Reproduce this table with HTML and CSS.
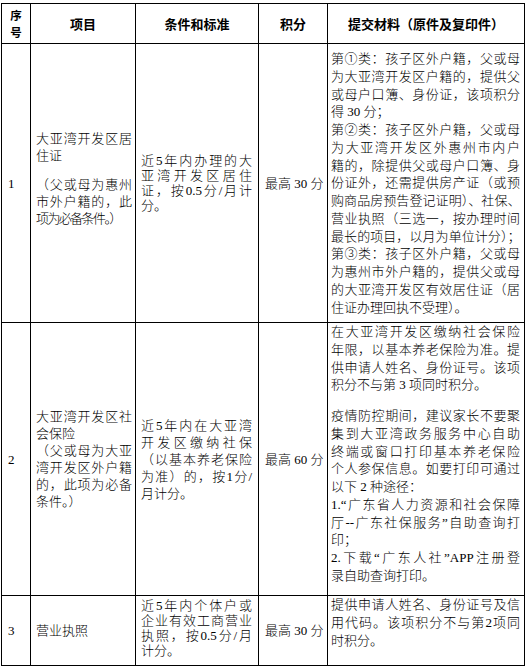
FILE: index.html
```html
<!DOCTYPE html>
<html lang="zh-CN">
<head>
<meta charset="utf-8">
<title>积分项目表</title>
<link rel="stylesheet" href="styles.css">
</head>
<body>
<table class="points">
  <colgroup>
    <col class="c-no"><col class="c-item"><col class="c-cond"><col class="c-score"><col class="c-docs">
  </colgroup>
  <thead>
    <tr class="r-head">
      <th class="no"><span class="hl">序</span><span class="hl">号</span></th>
      <th>项目</th>
      <th>条件和标准</th>
      <th>积分</th>
      <th>提交材料（原件及复印件）</th>
    </tr>
  </thead>
  <tbody>
    <tr class="r1">
      <td class="no">1</td>
      <td class="item">
        <span class="ln">大亚湾开发区居</span>
        <span class="end">住证</span>
        <span class="gap"></span>
        <span class="ln">（父或母为惠州</span>
        <span class="ln">市外户籍的，此</span>
        <span class="end squeeze">项为必备条件。）</span>
      </td>
      <td class="cond">
        <span class="ln">近5年内办理的大</span>
        <span class="ln">亚湾开发区居住</span>
        <span class="ln">证，按0.5分/月计</span>
        <span class="end">分。</span>
      </td>
      <td class="score">最高 30 分</td>
      <td class="docs">
        <span class="ln">第①类：孩子区外户籍，父或母</span>
        <span class="ln">为大亚湾开发区户籍的，提供父</span>
        <span class="ln">或母户口簿、身份证，该项积分</span>
        <span class="end">得 30 分；</span>
        <span class="ln">第②类：孩子区外户籍，父或母</span>
        <span class="ln">为大亚湾开发区外惠州市内户</span>
        <span class="ln">籍的，除提供父或母户口簿、身</span>
        <span class="ln">份证外，还需提供房产证（或预</span>
        <span class="ln tight">购商品房预告登记证明）、社保、</span>
        <span class="ln">营业执照（三选一，按办理时间</span>
        <span class="ln tight">最长的项目，以月为单位计分）；</span>
        <span class="ln">第③类：孩子区外户籍，父或母</span>
        <span class="ln">为惠州市外户籍的，提供父或母</span>
        <span class="ln">的大亚湾开发区有效居住证（居</span>
        <span class="end">住证办理回执不受理）。</span>
      </td>
    </tr>
    <tr class="r2">
      <td class="no">2</td>
      <td class="item">
        <span class="ln">大亚湾开发区社</span>
        <span class="end">会保险</span>
        <span class="ln">（父或母为大亚</span>
        <span class="ln">湾开发区外户籍</span>
        <span class="ln">的，此项为必备</span>
        <span class="end">条件。）</span>
      </td>
      <td class="cond">
        <span class="ln">近5年内在大亚湾</span>
        <span class="ln">开发区缴纳社保</span>
        <span class="ln">（以基本养老保险</span>
        <span class="ln">为准）的，按1分/</span>
        <span class="end">月计分。</span>
      </td>
      <td class="score">最高 60 分</td>
      <td class="docs">
        <span class="ln">在大亚湾开发区缴纳社会保险</span>
        <span class="ln">年限，以基本养老保险为准。提</span>
        <span class="ln">供申请人姓名、身份证号。该项</span>
        <span class="end">积分不与第 3 项同时积分。</span>
        <span class="gap gap-lg"></span>
        <span class="ln">疫情防控期间，建议家长不要聚</span>
        <span class="ln">集到大亚湾政务服务中心自助</span>
        <span class="ln">终端或窗口打印基本养老保险</span>
        <span class="ln">个人参保信息。如要打印可通过</span>
        <span class="end">以下 2 种途径：</span>
        <span class="ln">1.“广东省人力资源和社会保障</span>
        <span class="ln">厅--广东社保服务”自助查询打</span>
        <span class="end">印；</span>
        <span class="ln">2.下载“广东人社”APP注册登</span>
        <span class="end">录自助查询打印。</span>
      </td>
    </tr>
    <tr class="r3">
      <td class="no">3</td>
      <td class="item"><span class="end">营业执照</span></td>
      <td class="cond">
        <span class="ln">近5年内个体户或</span>
        <span class="ln">企业有效工商营业</span>
        <span class="ln">执照，按0.5分/月</span>
        <span class="end">计分。</span>
      </td>
      <td class="score">最高 30 分</td>
      <td class="docs">
        <span class="ln">提供申请人姓名、身份证号及信</span>
        <span class="ln">用代码。该项积分不与第2项同</span>
        <span class="end">时积分。</span>
      </td>
    </tr>
  </tbody>
</table>
</body>
</html>
```

FILE: styles.css
```css
html, body {
  margin: 0;
  padding: 0;
  background: #fff;
}

body {
  font-family: "Liberation Serif", "Noto Sans CJK SC", serif;
  font-size: 13px;
  font-weight: 300;
  color: #000;
}

.points {
  border-collapse: collapse;
  table-layout: fixed;
  width: 524px;
  margin: 3px 0 0 1px;
}

.c-no { width: 29px; }
.c-item { width: 105px; }
.c-cond { width: 123px; }
.c-score { width: 69px; }
.c-docs { width: 197px; }

.points th,
.points td {
  border: 1px solid #000;
  padding: 0;
  vertical-align: middle;
  text-align: left;
}

.points th {
  font-family: "Noto Sans CJK SC", sans-serif;
  font-weight: 700;
  font-size: 13px;
  line-height: 15px;
  text-align: center;
}

.points th .hl {
  display: block;
  height: 17px;
  font-size: 11.5px;
  line-height: 17px;
}

.r-head { height: 40px; }
.r1 { height: 279px; }
.r2 { height: 273px; }
.r3 { height: 70px; }

.points td {
  line-height: 17px;
}

.points td.no {
  padding-left: 6px;
}

.points td.item {
  padding: 0 3px 0 5px;
}

.points .r1 td.item {
  padding-bottom: 10px;
}

.points td.cond {
  padding: 0 6px 0 5px;
}

.points .r1 td.cond,
.points .r3 td.cond {
  line-height: 15px;
}

.points .r3 td.cond {
  padding-bottom: 5px;
}

.points td.score {
  padding-left: 6px;
  white-space: nowrap;
}

.points td.docs {
  vertical-align: top;
  padding: 0 4px 0 3px;
  line-height: 17.75px;
}

.points .r1 td.docs {
  padding-top: 6px;
}

.ln {
  display: block;
  white-space: nowrap;
  text-align: justify;
  text-align-last: justify;
}

.end {
  display: block;
  white-space: nowrap;
}

.gap {
  display: block;
  height: 12px;
}

.gap-lg {
  height: 13px;
}

.tight {
  letter-spacing: -0.5px;
}

.squeeze {
  letter-spacing: -1.6px;
}
```
